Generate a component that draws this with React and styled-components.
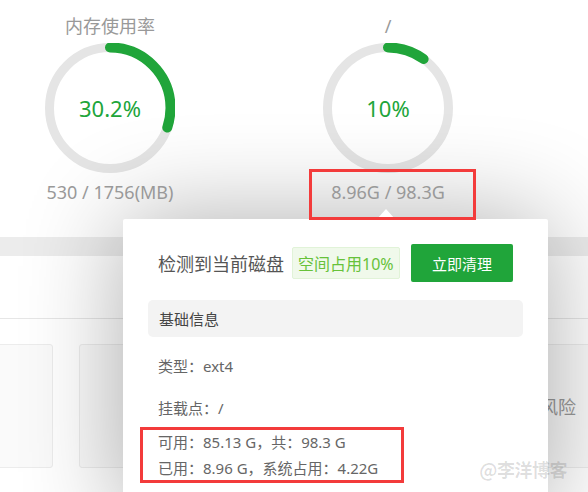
import React from "react";
import styled, { createGlobalStyle } from "styled-components";

const GlobalStyle = createGlobalStyle`
  html, body { margin: 0; padding: 0; background: #fff; }
  body { font-family: "Noto Sans", "Noto Sans CJK SC", sans-serif; }
  * { box-sizing: border-box; }
`;

const Page = styled.div`
  position: relative;
  width: 588px;
  height: 492px;
  overflow: hidden;
  background: #fff;
`;

const GaugeSection = styled.div`
  height: 237px;
  padding: 14px 0 0 10px;
  display: flex;
  align-items: flex-start;
  gap: 78px;
`;

const Gauge = styled.div`
  width: 200px;
  display: flex;
  flex-direction: column;
  align-items: center;
`;

const GaugeTitle = styled.div`
  font-size: 18px;
  line-height: 24px;
  color: #999;
`;

const RingWrap = styled.div`
  position: relative;
  width: 130px;
  height: 130px;
  margin-top: 5px;
  display: flex;
  align-items: center;
  justify-content: center;
`;

const RingSvg = styled.svg`
  position: absolute;
  inset: 0;
  transform: rotate(-90deg);
`;

const RingValue = styled.span`
  position: relative;
  font-size: 22px;
  color: #20a53a;
`;

const Stat = styled.div`
  position: relative;
  z-index: 3;
  margin-top: 7px;
  font-size: 18px;
  line-height: 24px;
  color: #999;
  white-space: nowrap;
  ${(p) =>
    p.$highlight &&
    `
    width: 167px;
    margin-top: -4px;
    margin-left: 9px;
    padding: 8px 9px 13px 0;
    border: 3px solid #f33b3b;
    text-align: center;
  `}
`;

const Band = styled.div`
  height: 19px;
  background: #ececec;
`;

const TabBar = styled.div`
  height: 63px;
  border-bottom: 1px solid #e6e6e6;
`;

const Cards = styled.div`
  display: flex;
  gap: 26px;
  margin: 25px 0 0 -207px;
`;

const Card = styled.div`
  flex: 0 0 260px;
  height: 124px;
  background: #fafafa;
  border: 1px solid #ececec;
  border-radius: 3px;
  display: flex;
  align-items: center;
  justify-content: flex-end;
  padding: 0 48px 0 0;
  font-size: 18px;
  color: #999;
`;

const Popup = styled.div`
  position: absolute;
  z-index: 2;
  left: 123px;
  top: 219px;
  width: 425px;
  height: 300px;
  background: #fff;
  border-radius: 2px;
  box-shadow: 0 0 100px rgba(0, 0, 0, 0.32);
  padding: 25px 25px 0 25px;

  &::before {
    content: "";
    position: absolute;
    top: -10px;
    left: 254px;
    border-left: 9px solid transparent;
    border-right: 9px solid transparent;
    border-bottom: 10px solid #fff;
  }
`;

const HeadRow = styled.div`
  display: flex;
  align-items: center;
  padding: 0 10px;
`;

const HeadTitle = styled.span`
  font-size: 18px;
  color: #555;
  font-family: "Noto Sans CJK SC", sans-serif;
`;

const Tag = styled.span`
  margin-left: 8px;
  height: 32px;
  display: inline-flex;
  align-items: center;
  padding: 0 5px;
  font-size: 16px;
  color: #67c23a;
  background: #f0f9eb;
  border: 1px solid #e1f3d8;
  border-radius: 2px;
`;

const CleanButton = styled.button`
  margin-left: auto;
  width: 102px;
  height: 38px;
  border: none;
  border-radius: 2px;
  background: #20a53a;
  color: #fff;
  font-size: 15px;
  font-family: "Noto Sans CJK SC", sans-serif;
  cursor: pointer;
`;

const InfoHead = styled.div`
  margin-top: 18px;
  height: 37px;
  display: flex;
  align-items: center;
  padding-left: 11px;
  background: #f3f3f3;
  border-radius: 5px;
  font-size: 15px;
  color: #444;
  font-family: "Noto Sans CJK SC", sans-serif;
`;

const InfoList = styled.div`
  padding-left: 10px;
`;

const Row = styled.div`
  margin-top: ${(p) => p.$mt || 0}px;
  font-size: 15px;
  line-height: 20px;
  color: #666;
  white-space: nowrap;
`;

const Highlight = styled.div`
  position: relative;
  z-index: 3;
  width: 264px;
  margin: 9px 0 0 -18px;
  padding: 2px 0 2px 15px;
  border: 3px solid #f33b3b;
`;

const Watermark = styled.div`
  position: absolute;
  z-index: 5;
  right: 21px;
  top: 456px;
  font-size: 18px;
  font-weight: 700;
  color: rgba(0, 0, 0, 0.13);
  font-family: "Noto Sans CJK SC", sans-serif;
  letter-spacing: -0.5px;
`;

function Ring({ percent, label }) {
  const r = 60.5;
  const c = 2 * Math.PI * r;
  const len = (percent / 100) * c;
  return (
    <RingWrap>
      <RingSvg width="130" height="130" viewBox="0 0 130 130">
        <circle cx="65" cy="65" r={r} fill="none" stroke="#e5e5e5" strokeWidth="9" />
        <circle
          cx="65"
          cy="65"
          r={r}
          fill="none"
          stroke="#20a53a"
          strokeWidth="10"
          strokeLinecap="round"
          strokeDasharray={`${len} ${c}`}
        />
      </RingSvg>
      <RingValue>{label}</RingValue>
    </RingWrap>
  );
}

export default function App() {
  return (
    <Page>
      <GlobalStyle />
      <GaugeSection>
        <Gauge>
          <GaugeTitle>内存使用率</GaugeTitle>
          <Ring percent={30.2} label="30.2%" />
          <Stat>530 / 1756(MB)</Stat>
        </Gauge>
        <Gauge>
          <GaugeTitle>/</GaugeTitle>
          <Ring percent={10} label="10%" />
          <Stat $highlight>8.96G / 98.3G</Stat>
        </Gauge>
      </GaugeSection>
      <Band />
      <TabBar />
      <Cards>
        <Card />
        <Card />
        <Card>存在风险</Card>
      </Cards>

      <Popup>
        <HeadRow>
          <HeadTitle>检测到当前磁盘</HeadTitle>
          <Tag>空间占用10%</Tag>
          <CleanButton>立即清理</CleanButton>
        </HeadRow>
        <InfoHead>基础信息</InfoHead>
        <InfoList>
          <Row $mt={19}>类型：ext4</Row>
          <Row $mt={22}>挂载点：/</Row>
          <Highlight>
            <Row>可用：85.13 G，共：98.3 G</Row>
            <Row $mt={6}>已用：8.96 G，系统占用：4.22G</Row>
          </Highlight>
        </InfoList>
      </Popup>
      <Watermark>@李洋博客</Watermark>
    </Page>
  );
}
